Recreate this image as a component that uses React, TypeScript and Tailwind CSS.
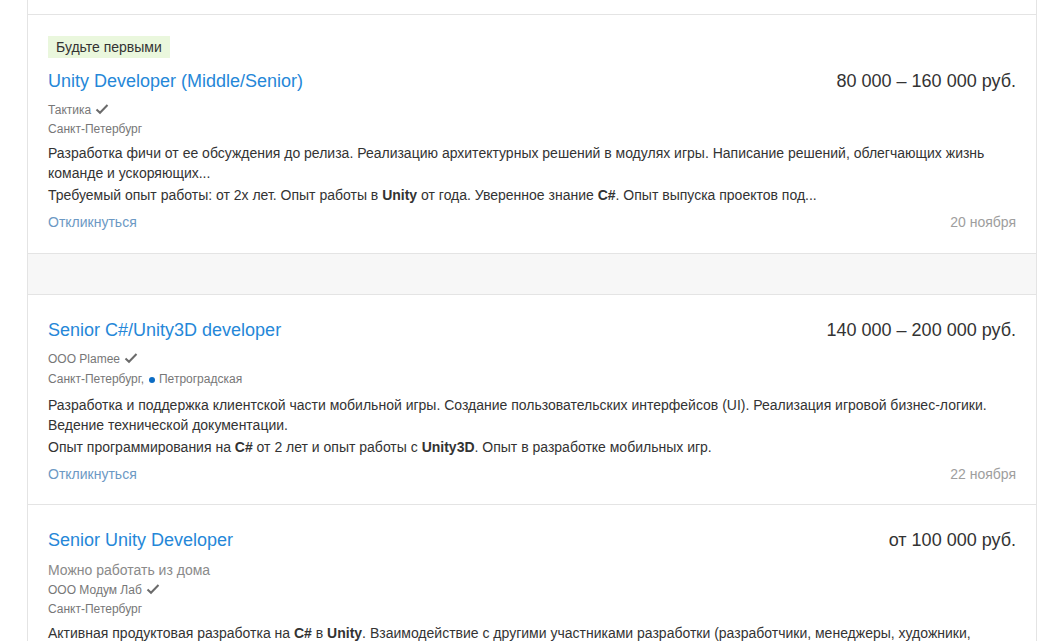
import React from "react";

const Check = () => (
  <svg width="14" height="12" viewBox="0 0 14 12" className="inline-block ml-[4px] align-[-1px]">
    <path d="M1.5 6.5 L5 9.8 L12.5 2" fill="none" stroke="#6b6b6b" strokeWidth="2" />
  </svg>
);

type Vac = {
  badge?: string;
  title: string;
  salary: string;
  remote?: string;
  company: string;
  city: React.ReactNode;
  desc1: React.ReactNode;
  desc2?: React.ReactNode;
  date?: string;
  pt: string;
  pb: string;
};

const Card = ({ v }: { v: Vac }) => (
  <div className={`border-b border-[#e4e4e4] bg-white px-[20px] ${v.pt} ${v.pb}`}>
    {v.badge && (
      <div className="mb-[12px] w-fit bg-[#eaf7dd] px-[8px] text-[14px] leading-[22px] text-[#333]">{v.badge}</div>
    )}
    <div className="flex items-start justify-between">
      <a className="text-[18px] leading-[22px] text-[#2587d8]">{v.title}</a>
      <div className="text-[18px] leading-[22px] text-[#333]">{v.salary}</div>
    </div>
    {v.remote && <div className="mt-[9px] text-[14px] leading-[20px] text-[#8a8a8a]">{v.remote}</div>}
    <div className={`${v.remote ? "mt-[1px]" : "mt-[9px]"} text-[12px] leading-[18px] text-[#777]`}>
      {v.company}
      <Check />
    </div>
    <div className="mt-[1px] text-[12px] leading-[18px] text-[#777]">{v.city}</div>
    <div className="mt-[5px] text-[14px] leading-[20px] text-[#333]">{v.desc1}</div>
    {v.desc2 && <div className="mt-[2px] text-[14px] leading-[20px] text-[#333]">{v.desc2}</div>}
    {v.date && (
      <div className="mt-[7px] flex justify-between text-[14px] leading-[20px]">
        <a className="text-[#6c99c4]">Откликнуться</a>
        <span className="text-[#9e9e9e]">{v.date}</span>
      </div>
    )}
  </div>
);

const vacs: Vac[] = [
  {
    badge: "Будьте первыми",
    title: "Unity Developer (Middle/Senior)",
    salary: "80\u00a0000 – 160\u00a0000 руб.",
    company: "Тактика",
    city: "Санкт-Петербург",
    desc1:
      "Разработка фичи от ее обсуждения до релиза. Реализацию архитектурных решений в модулях игры. Написание решений, облегчающих жизнь команде и ускоряющих...",
    desc2: (
      <>
        Требуемый опыт работы: от 2х лет. Опыт работы в <b>Unity</b> от года. Уверенное знание <b>C#</b>. Опыт выпуска проектов под...
      </>
    ),
    date: "20 ноября",
    pt: "pt-[21px]",
    pb: "pb-[21px]",
  },
];

const vacs2: Vac[] = [
  {
    title: "Senior C#/Unity3D developer",
    salary: "140\u00a0000 – 200\u00a0000 руб.",
    company: "ООО Plamee",
    city: (
      <span className="inline-flex items-center leading-[21px]">
        Санкт-Петербург,
        <span className="ml-[5px] mr-[4px] inline-block h-[6px] w-[6px] rounded-full bg-[#0b6cc4]" />
        Петроградская
      </span>
    ),
    desc1:
      "Разработка и поддержка клиентской части мобильной игры. Создание пользовательских интерфейсов (UI). Реализация игровой бизнес-логики. Ведение технической документации.",
    desc2: (
      <>
        Опыт программирования на <b>C#</b> от 2 лет и опыт работы с <b>Unity3D</b>. Опыт в разработке мобильных игр.
      </>
    ),
    date: "22 ноября",
    pt: "pt-[24px]",
    pb: "pb-[20px]",
  },
  {
    title: "Senior Unity Developer",
    salary: "от 100\u00a0000 руб.",
    remote: "Можно работать из дома",
    company: "ООО Модум Лаб",
    city: "Санкт-Петербург",
    desc1: (
      <>
        Активная продуктовая разработка на <b>C#</b> в <b>Unity</b>. Взаимодействие с другими участниками разработки (разработчики, менеджеры, художники, тестировщики)...
      </>
    ),
    desc2: (
      <>
        Опыт коммерческой разработки на <b>Unity</b> от 3 лет. Отличное знание <b>C#</b>.
      </>
    ),
    date: "23 ноября",
    pt: "pt-[24px]",
    pb: "pb-[20px]",
  },
];

export default function App() {
  return (
    <div className="h-[641px] w-[1055px] overflow-hidden bg-white font-['Liberation_Sans',Arial,sans-serif]">
      <div className="ml-[27px] w-[1010px] border-x border-[#e4e4e4]">
        <div className="h-[15px] border-b border-[#e4e4e4] bg-white" />
        {vacs.map((v, i) => (
          <Card key={i} v={v} />
        ))}
        <div className="h-[41px] border-b border-[#e4e4e4] bg-[#f7f7f7]" />
        {vacs2.map((v, i) => (
          <Card key={i} v={v} />
        ))}
      </div>
    </div>
  );
}
